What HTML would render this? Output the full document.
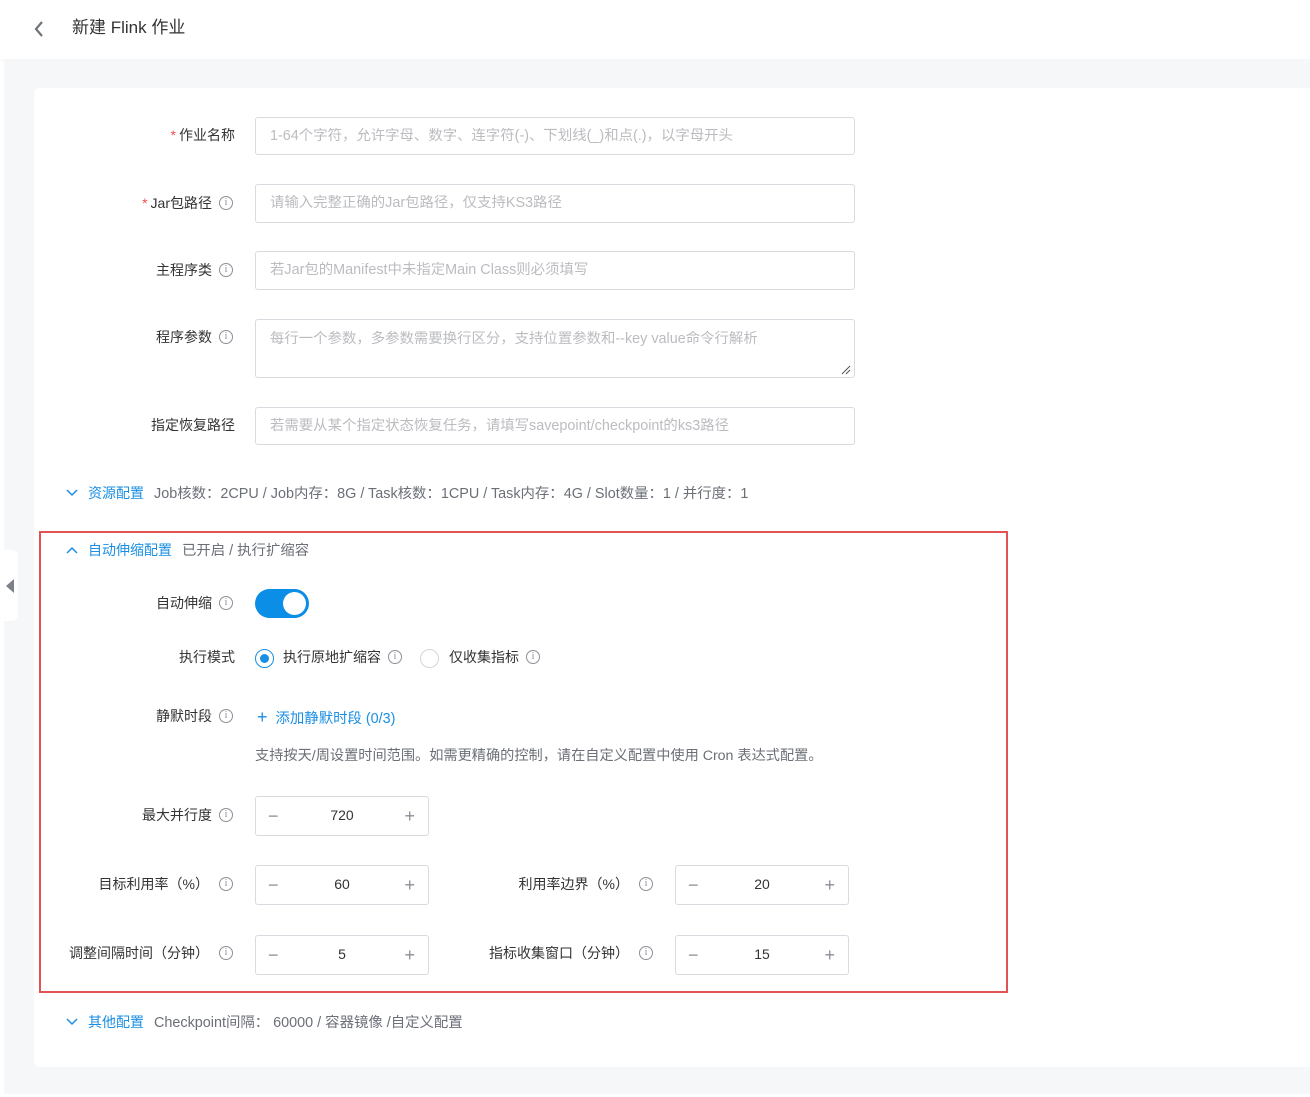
<!DOCTYPE html>
<html><head><meta charset="utf-8"><style>
*{box-sizing:border-box;margin:0;padding:0}
body{width:1310px;height:1097px;background:#fff;font-family:"Liberation Sans","Noto Sans CJK SC",sans-serif;position:relative;overflow:hidden;color:#333;font-size:14px}
.a{position:absolute;white-space:nowrap}
.lbl{position:absolute;white-space:nowrap;text-align:right;font-size:14px;color:#333;line-height:20px;display:flex;align-items:center}
.inp{position:absolute;border:1px solid #d9dbe0;border-radius:3px;background:#fff;color:#bbbcc0;font-size:14.4px;padding:0 14px;line-height:36px;white-space:nowrap}
.req{color:#f0514f;margin-right:3px}
.ic{display:inline-block;width:14px;height:14px;border:1px solid #8b8f97;border-radius:50%;font-size:10px;line-height:12px;text-align:center;color:#8b8f97;font-family:"Liberation Serif",serif;margin-left:7px;flex:none}
.il{display:inline-flex;align-items:center}
.blue{color:#1a8fe3}
.sec{position:absolute;font-size:14px;line-height:20px;white-space:nowrap}
.sec .t{color:#1a8fe3;font-size:14px;margin-right:10px}
.sec .d{color:#6b6f77;font-size:14.4px}
.sp{position:absolute;width:174px;height:40px;border:1px solid #d9dbe0;border-radius:3px;background:#fff}
.sp .m,.sp .p{position:absolute;top:9px;font-size:18px;color:#8b8f97;line-height:20px}
.sp .m{left:12px}.sp .p{right:13px}
.sp .v{position:absolute;left:0;right:0;top:10px;text-align:center;font-size:14px;color:#333}
</style></head><body>
<div class="a" style="left:0;top:0;width:1310px;height:59px;background:#fff;box-shadow:0 2px 3px rgba(0,0,0,0.03)"></div>
<svg class="a" style="left:32px;top:19px" width="14" height="20"><path d="M10 3 L4 10 L10 17" stroke="#6f737a" stroke-width="2.2" fill="none"/></svg>
<div class="a" style="left:72px;top:16px;font-size:17px;color:#333;line-height:24px">新建 Flink 作业</div>
<div class="a" style="left:4px;top:59px;width:1306px;height:1035px;background:#f6f7f9"></div>
<div class="a" style="left:34px;top:88px;width:1290px;height:979px;background:#fff;border-radius:6px"></div>
<div class="a" style="left:0;top:550px;width:18px;height:71px;background:#fff;border-radius:0 6px 6px 0"></div>
<svg class="a" style="left:6px;top:579px" width="8" height="14"><path d="M8 0 L0 7 L8 14Z" fill="#7d8088"/></svg>

<div class="lbl" style="right:1075px;top:125px"><span class="req">*</span>作业名称</div>
<div class="inp" style="left:255px;top:117px;width:600px;height:38px">1-64个字符，允许字母、数字、连字符(-)、下划线(_)和点(.)，以字母开头</div>

<div class="lbl" style="right:1077px;top:193px"><span class="req">*</span>Jar包路径<span class="ic">i</span></div>
<div class="inp" style="left:255px;top:184px;width:600px;height:39px">请输入完整正确的Jar包路径，仅支持KS3路径</div>

<div class="lbl" style="right:1077px;top:260px">主程序类<span class="ic">i</span></div>
<div class="inp" style="left:255px;top:251px;width:600px;height:39px">若Jar包的Manifest中未指定Main Class则必须填写</div>

<div class="lbl" style="right:1077px;top:327px">程序参数<span class="ic">i</span></div>
<div class="inp" style="left:255px;top:319px;width:600px;height:59px;line-height:38px">每行一个参数，多参数需要换行区分，支持位置参数和--key value命令行解析</div>
<svg class="a" style="left:841px;top:365px" width="10" height="10"><path d="M1 9 L9 1 M5 9 L9 5" stroke="#555" stroke-width="1"/></svg>

<div class="lbl" style="right:1075px;top:415px">指定恢复路径</div>
<div class="inp" style="left:255px;top:407px;width:600px;height:38px">若需要从某个指定状态恢复任务，请填写savepoint/checkpoint的ks3路径</div>

<svg class="a" style="left:66px;top:488px" width="12" height="10"><path d="M1 2 L6 7 L11 2" stroke="#1a8fe3" stroke-width="1.5" fill="none"/></svg>
<div class="sec" style="left:88px;top:483px"><span class="t">资源配置</span><span class="d">Job核数：2CPU / Job内存：8G / Task核数：1CPU / Task内存：4G / Slot数量：1 / 并行度：1</span></div>

<div class="a" style="left:39px;top:531px;width:969px;height:462px;border:2.5px solid #e25454"></div>
<svg class="a" style="left:66px;top:545px" width="12" height="10"><path d="M1 8 L6 3 L11 8" stroke="#1a8fe3" stroke-width="1.5" fill="none"/></svg>
<div class="sec" style="left:88px;top:540px"><span class="t">自动伸缩配置</span><span class="d">已开启 / 执行扩缩容</span></div>

<div class="lbl" style="right:1077px;top:593px">自动伸缩<span class="ic">i</span></div>
<div class="a" style="left:255px;top:589px;width:54px;height:29px;border-radius:15px;background:#0b8ee6"></div>
<div class="a" style="left:283px;top:592px;width:23px;height:23px;border-radius:50%;background:#fff"></div>

<div class="lbl" style="right:1075px;top:647px">执行模式</div>
<div class="a" style="left:255px;top:649px;width:19px;height:19px;border-radius:50%;border:1.5px solid #1a8fe3"></div>
<div class="a" style="left:260px;top:654px;width:9px;height:9px;border-radius:50%;background:#1a8fe3"></div>
<div class="a il" style="left:283px;top:647px;line-height:20px">执行原地扩缩容<span class="ic">i</span></div>
<div class="a" style="left:420px;top:649px;width:19px;height:19px;border-radius:50%;border:1px solid #d3d5da"></div>
<div class="a il" style="left:449px;top:647px;line-height:20px">仅收集指标<span class="ic">i</span></div>

<div class="lbl" style="right:1077px;top:706px">静默时段<span class="ic">i</span></div>
<div class="a blue" style="left:257px;top:706px;line-height:22px;font-size:14.4px"><span style="font-size:18px;margin-right:8px">+</span>添加静默时段 (0/3)</div>
<div class="a" style="left:255px;top:746px;line-height:20px;color:#6b6f77;font-size:14.2px">支持按天/周设置时间范围。如需更精确的控制，请在自定义配置中使用 Cron 表达式配置。</div>

<div class="lbl" style="right:1077px;top:805px">最大并行度<span class="ic">i</span></div>
<div class="sp" style="left:255px;top:796px"><span class="m">−</span><span class="v">720</span><span class="p">+</span></div>

<div class="lbl" style="right:1077px;top:874px">目标利用率（%）<span class="ic" style="margin-left:10px">i</span></div>
<div class="sp" style="left:255px;top:865px"><span class="m">−</span><span class="v">60</span><span class="p">+</span></div>
<div class="lbl" style="right:657px;top:874px">利用率边界（%）<span class="ic" style="margin-left:10px">i</span></div>
<div class="sp" style="left:675px;top:865px"><span class="m">−</span><span class="v">20</span><span class="p">+</span></div>

<div class="lbl" style="right:1077px;top:943px">调整间隔时间（分钟）<span class="ic" style="margin-left:10px">i</span></div>
<div class="sp" style="left:255px;top:935px"><span class="m">−</span><span class="v">5</span><span class="p">+</span></div>
<div class="lbl" style="right:657px;top:943px">指标收集窗口（分钟）<span class="ic" style="margin-left:10px">i</span></div>
<div class="sp" style="left:675px;top:935px"><span class="m">−</span><span class="v">15</span><span class="p">+</span></div>

<svg class="a" style="left:66px;top:1017px" width="12" height="10"><path d="M1 2 L6 7 L11 2" stroke="#1a8fe3" stroke-width="1.5" fill="none"/></svg>
<div class="sec" style="left:88px;top:1012px"><span class="t">其他配置</span><span class="d">Checkpoint间隔： 60000 / 容器镜像 /自定义配置</span></div>
</body></html>
